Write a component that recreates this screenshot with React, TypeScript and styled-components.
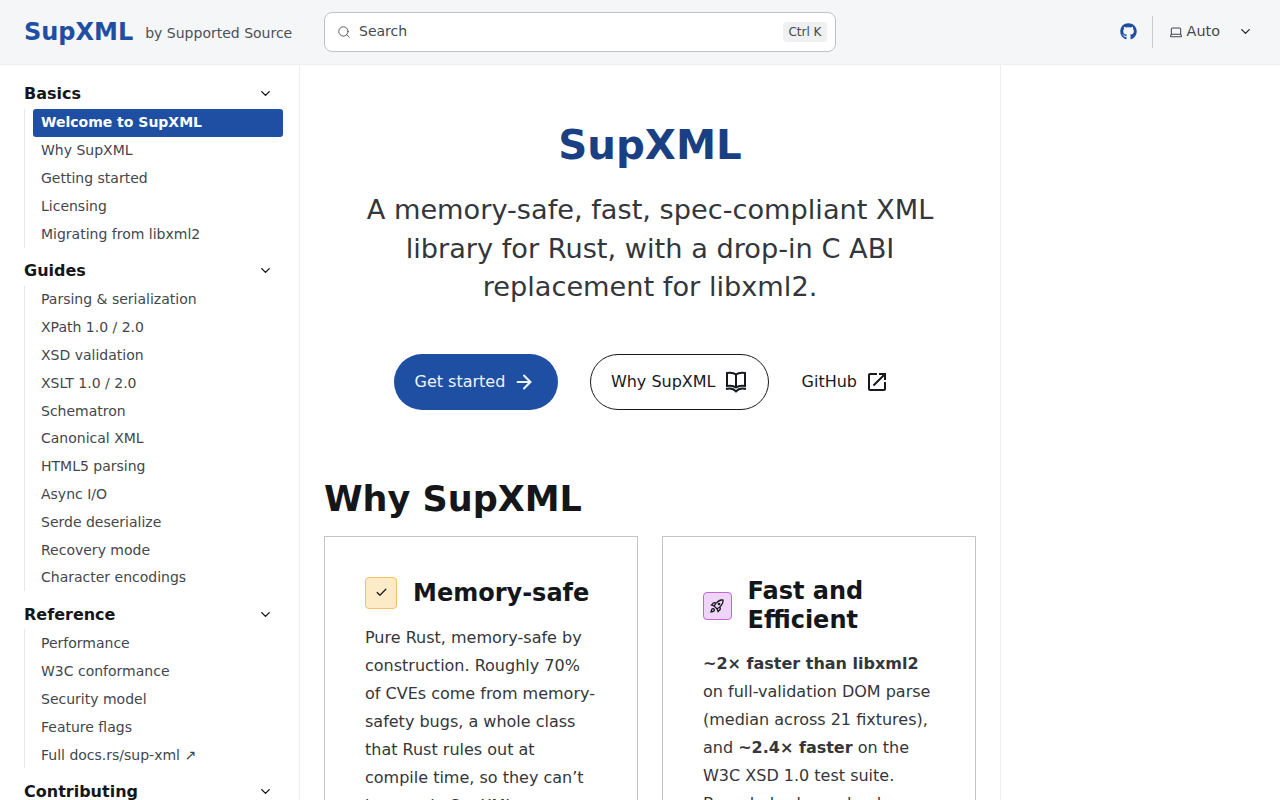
import styled, { createGlobalStyle } from "styled-components";
import { ArrowRight, Check, ChevronDown, Laptop, Search } from "lucide-react";
import { FaGithub } from "react-icons/fa";
import { MdOpenInNew, MdOutlineRocketLaunch } from "react-icons/md";

const navSections = [
  {
    title: "Basics",
    items: ["Welcome to SupXML", "Why SupXML", "Getting started", "Licensing", "Migrating from libxml2"],
  },
  {
    title: "Guides",
    items: [
      "Parsing & serialization",
      "XPath 1.0 / 2.0",
      "XSD validation",
      "XSLT 1.0 / 2.0",
      "Schematron",
      "Canonical XML",
      "HTML5 parsing",
      "Async I/O",
      "Serde deserialize",
      "Recovery mode",
      "Character encodings",
    ],
  },
  {
    title: "Reference",
    items: ["Performance", "W3C conformance", "Security model", "Feature flags", "Full docs.rs/sup-xml ↗"],
  },
  { title: "Contributing", items: ["Development setup"] },
];

function BookIcon() {
  return (
    <svg width="24" height="24" viewBox="0 0 24 24" fill="none" stroke="currentColor" strokeWidth="2">
      <path d="M12 4.5C10 3 6 2.5 3 3v13c3-.5 7 0 9 1.5 2-1.5 6-2 9-1.5V3c-3-.5-7 0-9 1.5zM12 4.5v13" />
      <path d="M2 19c4-1 8 0 10 2.5 2-2.5 6-3.5 10-2.5" />
    </svg>
  );
}

function App() {
  return (
    <>
      <GlobalStyle />
      <Page>
        <Header>
          <Brand>
            <Logo>SupXML</Logo>
            <ByLine>by Supported Source</ByLine>
          </Brand>
          <SearchBox>
            <Search size={14} strokeWidth={1.5} />
            <SearchLabel>Search</SearchLabel>
            <Kbd>Ctrl K</Kbd>
          </SearchBox>
          <HeaderRight>
            <GithubLink>
              <FaGithub size={17} />
            </GithubLink>
            <Divider />
            <ThemeToggle>
              <Laptop size={14} strokeWidth={1.75} />
              <span>Auto</span>
            </ThemeToggle>
            <ThemeChevron>
              <ChevronDown size={15} strokeWidth={2.25} />
            </ThemeChevron>
          </HeaderRight>
        </Header>
        <Body>
          <Sidebar>
            {navSections.map((section) => (
              <section key={section.title}>
                <SectionTitle>
                  {section.title}
                  <ChevronDown size={15} strokeWidth={2.25} />
                </SectionTitle>
                <NavList>
                  {section.items.map((item) => (
                    <NavItem key={item} $active={item === "Welcome to SupXML"}>
                      {item}
                    </NavItem>
                  ))}
                </NavList>
              </section>
            ))}
          </Sidebar>
          <Main>
            <Hero>
              <HeroTitle>SupXML</HeroTitle>
              <Tagline>
                A memory-safe, fast, spec-compliant XML library for Rust, with a drop-in C ABI replacement for libxml2.
              </Tagline>
              <Actions>
                <PrimaryButton>
                  Get started
                  <ArrowRight size={22} strokeWidth={2.25} />
                </PrimaryButton>
                <OutlineButton>
                  Why SupXML
                  <BookIcon />
                </OutlineButton>
                <PlainButton>
                  GitHub
                  <MdOpenInNew size={24} />
                </PlainButton>
              </Actions>
            </Hero>
            <SectionHeading>Why SupXML</SectionHeading>
            <Cards>
              <Card>
                <CardHead>
                  <IconTile $bg="#fdebc8" $border="#f4c163" $size={32}>
                    <Check size={13} strokeWidth={2.25} />
                  </IconTile>
                  <CardTitle>Memory-safe</CardTitle>
                </CardHead>
                <CardText>
                  Pure Rust, memory-safe by construction. Roughly 70% of CVEs come from memory-safety bugs, a whole
                  class that Rust rules out at compile time, so they can’t happen in SupXML.
                </CardText>
              </Card>
              <Card>
                <CardHead>
                  <IconTile $bg="#f0d5fb" $border="#c566dc" $size={28.5}>
                    <MdOutlineRocketLaunch size={16} />
                  </IconTile>
                  <CardTitle>Fast and Efficient</CardTitle>
                </CardHead>
                <CardText>
                  <strong>~2× faster than libxml2</strong> on full-validation DOM parse (median across 21 fixtures), and{" "}
                  <strong>~2.4× faster</strong> on the W3C XSD 1.0 test suite. Bounded schema loads.
                </CardText>
              </Card>
            </Cards>
          </Main>
          <Aside />
        </Body>
      </Page>
    </>
  );
}

export default App;

const GlobalStyle = createGlobalStyle`
  html, body {
    margin: 0;
    height: 100%;
    overflow: hidden;
    background: #fff;
  }

  body {
    font-family: "DejaVu Sans", sans-serif;
    color: #2b2e33;
  }

  * {
    box-sizing: border-box;
  }
`;

const Page = styled.div`
  width: 1280px;
  height: 800px;
  display: flex;
  flex-direction: column;
  overflow: hidden;
`;

const Header = styled.header`
  flex: 0 0 65px;
  display: flex;
  align-items: center;
  padding: 0 24px 1px;
  background: #f5f6f8;
  border-bottom: 1px solid #edeef0;
`;

const Brand = styled.div`
  width: 300px;
  display: flex;
  align-items: center;
  gap: 12px;
`;

const Logo = styled.div`
  font-size: 24px;
  font-weight: 700;
  color: #1e4fa3;
`;

const ByLine = styled.div`
  font-size: 14px;
  color: #4b5058;
  padding-top: 3px;
`;

const SearchBox = styled.div`
  width: 512px;
  height: 40px;
  display: flex;
  align-items: center;
  gap: 8px;
  padding: 0 8px 0 12px;
  background: #fff;
  border: 1px solid #c0c2c5;
  border-radius: 8px;
  color: #444950;
`;

const SearchLabel = styled.span`
  flex: 1;
  font-size: 14px;
  padding-bottom: 2px;
`;

const Kbd = styled.kbd`
  font-family: "DejaVu Sans", sans-serif;
  font-size: 12px;
  line-height: 20px;
  padding: 0 5.5px;
  background: #eff0f2;
  border-radius: 4px;
`;

const HeaderRight = styled.div`
  margin-left: auto;
  display: flex;
  align-items: center;
  padding-right: 3px;
`;

const GithubLink = styled.a`
  display: flex;
  color: #1e4fa3;
  margin-right: 1px;
`;

const Divider = styled.div`
  width: 1px;
  height: 32px;
  margin: 0 16px 0 14px;
  background: #c9cbce;
`;

const ThemeToggle = styled.div`
  display: flex;
  align-items: center;
  gap: 4px;
  font-size: 14.4px;
  color: #44484e;

  span {
    padding-bottom: 2px;
  }
`;

const ThemeChevron = styled.div`
  display: flex;
  margin-left: 18px;
  color: #2b2e33;
`;

const Body = styled.div`
  flex: 1;
  display: flex;
  min-height: 0;
`;

const Sidebar = styled.nav`
  flex: 0 0 300px;
  padding: 13.5px 16px 0 24px;
  border-right: 1px solid #eceef0;
`;

const SectionTitle = styled.div`
  height: 30px;
  display: flex;
  align-items: center;
  justify-content: space-between;
  padding-right: 10.5px;
  font-size: 16px;
  font-weight: 700;
  color: #14161a;
`;

const NavList = styled.div`
  display: flex;
  flex-direction: column;
  margin-bottom: 8.1px;
  padding-left: 8px;
  border-left: 1px solid #e6e7e9;
`;

const NavItem = styled.a<{ $active?: boolean }>`
  height: ${(p) => (p.$active ? "28px" : "27.8px")};
  margin-bottom: ${(p) => (p.$active ? "-0.2px" : "0")};
  padding-bottom: ${(p) => (p.$active ? "1px" : "0")};
  display: flex;
  align-items: center;
  padding-left: 8px;
  font-size: 14px;
  font-weight: ${(p) => (p.$active ? 700 : 400)};
  color: ${(p) => (p.$active ? "#fff" : "#43474d")};
  background: ${(p) => (p.$active ? "#1e4fa3" : "transparent")};
  border-radius: 3px;
`;

const Main = styled.main`
  flex: 0 0 701px;
  padding: 0 24px;
  border-right: 1px solid #eceef0;
`;

const Hero = styled.div`
  display: flex;
  flex-direction: column;
  align-items: center;
  padding: 49px 24px 0;
`;

const HeroTitle = styled.h1`
  margin: 0;
  font-size: 40.3px;
  line-height: 64px;
  font-weight: 700;
  color: #1a3f82;
`;

const Tagline = styled.p`
  margin: 13px 0 0;
  font-size: 27.2px;
  line-height: 38.5px;
  text-align: center;
  color: #33363b;
`;

const Actions = styled.div`
  display: flex;
  align-items: center;
  margin-top: 47px;
  gap: 32px;
  font-size: 16px;
`;

const PillButton = styled.a`
  height: 56px;
  display: flex;
  align-items: center;
  gap: 8px;
  border-radius: 28px;
`;

const PrimaryButton = styled(PillButton)`
  padding: 0 22.5px 0 21px;
  background: #1e4fa3;
  color: #eef3fb;
`;

const OutlineButton = styled(PillButton)`
  padding: 0 20px;
  border: 1px solid #17191c;
  color: #17191c;
`;

const PlainButton = styled(PillButton)`
  margin-left: -20px;
  padding: 0 17.5px 0 21px;
  color: #17191c;
`;

const SectionHeading = styled.h2`
  margin: 65px 0 13.4px;
  font-size: 35px;
  line-height: 48px;
  font-weight: 700;
  color: #14161a;
`;

const Cards = styled.div`
  display: grid;
  grid-template-columns: 1fr 1fr;
  gap: 24px;
  align-items: start;
`;

const Card = styled.article`
  padding: 40px;
  border: 1px solid #c2c4c7;
  min-height: 400px;
`;

const CardHead = styled.div`
  display: flex;
  align-items: center;
  gap: 16px;
  margin-bottom: 15px;
`;

const IconTile = styled.div<{ $bg: string; $border: string; $size: number }>`
  flex: 0 0 ${(p) => p.$size}px;
  height: ${(p) => p.$size}px;
  display: flex;
  align-items: center;
  justify-content: center;
  background: ${(p) => p.$bg};
  border: 1px solid ${(p) => p.$border};
  border-radius: 4px;
  color: #17191c;
`;

const CardTitle = styled.h3`
  margin: 0;
  padding-top: 0.6px;
  font-size: 24px;
  line-height: 28.8px;
  font-weight: 700;
  color: #14161a;
`;

const CardText = styled.p`
  margin: 0;
  font-size: 16px;
  line-height: 28px;
  color: #33363b;

  strong {
    font-weight: 700;
  }
`;

const Aside = styled.aside`
  flex: 1;
`;
